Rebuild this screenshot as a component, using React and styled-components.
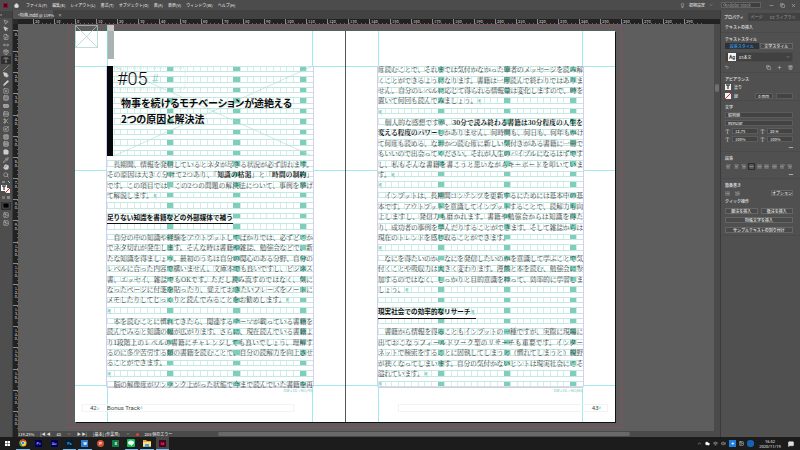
import React from 'react';
import styled, { createGlobalStyle, css } from 'styled-components';
import {
  MousePointer2, MousePointer, FileSymlink, MoveHorizontal, Package, Type, Slash, PenTool, Pencil,
  SquareX, Square, RectangleHorizontal, Rows3, Scissors, Scaling, SquareDashedBottom, Rows2,
  StickyNote, Pipette, Hand, Search, House, Plus, Trash2, Undo2, AlignLeft, AlignCenter,
  AlignRight, AlignJustify, List, ListOrdered, ChevronDown, Copy, Minus, X, Lightbulb,
  Cloud, Wifi, Volume2, MessageSquare, ChevronUp, Image as ImageIcon,
} from 'lucide-react';

const SANS = '"Noto Sans CJK JP", "Noto Sans", sans-serif';
const MINT = '#7fcdbb';
const LINE = '#c6e8e2';
const CELL = '#d3eee9';
const GUIDE = '#a3e9f0';

const Global = createGlobalStyle`
  *, *::before, *::after { box-sizing: border-box; }
  body { margin: 0; background: #535353; font-family: ${SANS}; overflow: hidden; }
  button, input, select { font: inherit; color: inherit; margin: 0; padding: 0; border: 0; background: none; border-radius: 0; min-width: 0; }
  select { appearance: none; }
  svg { display: block; flex: none; }
  h1, h2, p { margin: 0; font-size: inherit; font-weight: inherit; }
`;

const Shell = styled.div`
  display: grid;
  grid-template-rows: 10px 1fr 13px;
  height: 100vh;
  color: #dcdcdc;
  font-size: 4px;
  font-weight: 500;
  line-height: 6px;
  white-space: nowrap;
`;
const MenuBar = styled.header`
  display: flex;
  align-items: center;
  background: #4c4c4c;
  padding: 0 4px 0 3px;
`;
const AppLogo = styled.span`
  width: 5px; height: 5px;
  margin-right: 6px;
  background: #49021f;
  border: 1px solid #8a1440;
`;
const Menus = styled.nav`
  display: flex;
  gap: 5px;
  flex: 1;
  margin-left: 7px;
  button { line-height: 6px; }
`;
const MenuRight = styled.div`
  display: flex;
  align-items: center;
  gap: 4px;
`;
const SearchBox = styled.label`
  display: flex;
  align-items: center;
  width: 40px; height: 6px;
  margin-left: 4px;
  padding-left: 1px;
  background: #3f3f3f;
  border: 1px solid #626262;
  input { width: 30px; height: 4px; line-height: 4px; }
  input::placeholder { color: #8a8a8a; }
`;
const WindowKeys = styled.div`
  display: flex;
  align-items: center;
  gap: 6px;
  margin-left: 4px;
`;

const Body = styled.div`
  display: grid;
  grid-template-columns: 13px 1fr 80px;
  min-height: 0;
`;
const ToolRail = styled.aside`
  display: flex;
  flex-direction: column;
  align-items: center;
  background: #4e4e4e;
  border-right: 1px solid #3a3a3a;
  padding-top: 1px;
  color: #cdcdcd;
`;
const RailGrip = styled.div`
  width: 12px; height: 7px;
  background: #424242;
`;
const Tools = styled.div`
  display: grid;
  grid-template-rows: repeat(21, 1fr);
  height: 161px;
  width: 12px;
`;
const Tool = styled.button`
  display: grid;
  place-items: center;
  width: 10px;
  margin-left: 1px;
  background: ${(p) => (p.$on ? '#2f2f2f' : 'transparent')};
`;
const RailSwatch = styled.div`
  display: flex;
  flex-direction: column;
  align-items: center;
  gap: 2px;
  margin-top: 1px;
`;

const Workspace = styled.main`
  display: grid;
  grid-template-rows: 9px 5px 1fr 6px;
  grid-template-columns: 5px 1fr 6px;
  min-width: 0; min-height: 0;
  background: #5e5e5e;
`;
const TabBar = styled.div`
  grid-column: 1 / -1;
  display: flex;
  background: #424242;
`;
const DocTab = styled.button`
  width: 40px;
  text-align: left;
  padding-left: 5px;
  background: #535353;
`;
const rulerNumber = css`
  font-size: 4px;
  line-height: 4px;
  color: #bdbdbd;
`;
const RulerCorner = styled.div`
  background: #2a2a2a;
`;
const RulerX = styled.div`
  display: grid;
  grid-template-columns: repeat(32, 1fr);
  padding: 0 15px;
  background: #222;
  grid-column: 2 / -1;
  overflow: hidden;
  span { ${rulerNumber} padding-left: 1px; min-width: 0; border-left: 1px solid #8a8a8a;
    background: repeating-linear-gradient(90deg, #666 0 1px, transparent 1px 4px) 0 100% / 100% 1px no-repeat; }
`;
const RulerY = styled.div`
  display: grid;
  grid-template-rows: repeat(19, 1fr);
  padding: 6px 0 5px;
  background: #222;
  grid-row: 3 / -1;
  overflow: hidden;
  span { ${rulerNumber} min-height: 0; padding-top: 1px; border-top: 1px solid #8a8a8a; writing-mode: vertical-rl; text-orientation: upright;
    background: repeating-linear-gradient(180deg, #666 0 1px, transparent 1px 4px) 100% 0 / 1px 100% no-repeat; }
`;
const Canvas = styled.section`
  padding: 0 92px 3px 50px;
  display: grid;
  min-width: 0; min-height: 0;
`;
const ScrollY = styled.div`
  background: #4a4a4a;
  padding-top: 60px;
  &::before { content: ''; display: block; width: 4px; height: 8px; margin: 0 1px; border-radius: 2px; background: #707070; }
`;
const StatusBar = styled.div`
  grid-column: 2 / -1;
  display: flex;
  align-items: center;
  gap: 6px;
  background: #4a4a4a;
  overflow: hidden;
`;
const Dot = styled.i`
  width: 3px; height: 3px;
  border-radius: 50%;
  background: #e8432e;
`;
const ScrollX = styled.div`
  flex: 1;
  height: 6px;
  margin-left: 40px;
  padding: 1px 0;
  &::before { content: ''; display: block; width: 82%; height: 4px; border-radius: 2px; background: #696969; }
`;

const Bleed = styled.div`
  position: relative;
  display: grid;
  border: 1px solid #85505e;
  padding: 6px 6px 5px;
  min-height: 0;
`;
const Spread = styled.div`
  display: grid;
  grid-template-columns: 1fr 1fr;
  background: #fff;
  box-shadow: 1px 1px 0 #111;
  min-height: 0;
`;
const Page = styled.article`
  position: relative;
  display: flex;
  flex-direction: column;
  padding: 35px 32px 0;
  min-width: 0; min-height: 0;
  background:
    linear-gradient(${GUIDE}, ${GUIDE}) 32px 0 / 1px 100% no-repeat,
    linear-gradient(${GUIDE}, ${GUIDE}) calc(100% - 32px) 0 / 1px 100% no-repeat,
    linear-gradient(${GUIDE}, ${GUIDE}) 0 35px / 100% 1px no-repeat,
    linear-gradient(${GUIDE}, ${GUIDE}) 0 139px / 100% 1px no-repeat,
    linear-gradient(${GUIDE}, ${GUIDE}) 0 calc(100% - 36px) / 100% 1px no-repeat;
  & + & { border-left: 1px solid #555; }
`;
const Frame = styled.div`
  container-type: inline-size;
  flex: 1;
  min-height: 0;
`;
/* 31 characters by 31 lines, the em being one cell wide */
const FrameGrid = styled.div`
  display: grid;
  grid-template-rows: repeat(31, 1fr);
  grid-template-columns: 100%;
  row-gap: 4px;
  height: 100%;
  font-size: calc(100cqi / 31);
  box-shadow: -1px 0 0 #d6cdf2, 1px 0 0 #d6cdf2, 0 1px 0 #e0c6e2;
  background: #fff;
`;
const Row = styled.p`
  grid-column: 1;
  grid-row: ${(p) => p.$n};
  display: flex;
  align-items: center;
  min-height: 0;
  line-height: 10px;
  color: #3c3c3c;
  font-family: "Noto Serif CJK JP", "Liberation Serif", ${SANS};
  font-weight: 400;
  border-top: 1px solid ${LINE};
  border-bottom: 1px solid ${LINE};
  background:
    linear-gradient(90deg,
      transparent calc(900% / 31), ${MINT} calc(900% / 31) calc(1000% / 31),
      transparent calc(1000% / 31) calc(1900% / 31), ${MINT} calc(1900% / 31) calc(2000% / 31),
      transparent calc(2000% / 31) calc(2900% / 31), ${MINT} calc(2900% / 31) calc(3000% / 31),
      transparent calc(3000% / 31)) border-box,
    repeating-linear-gradient(90deg, ${CELL} 0 1px, transparent 1px calc(100% / 31));
`;
const Line = styled.span`
  flex: 1;
  white-space: pre;
  text-align-last: ${(p) => (p.$full ? 'justify' : 'left')};
  b { font-weight: 700; color: #111; }
  i { font-style: normal; color: ${MINT}; font-size: 5px; }
`;
const SubHeading = styled.h2`
  align-self: flex-start;
  z-index: 1;
  font-family: ${SANS};
  font-weight: 700;
  line-height: 6px;
  color: #111;
  padding-bottom: 3px;
  border-bottom: 1px solid #111;
  i { font-style: normal; color: ${MINT}; font-size: 5px; }
`;
const Opener = styled.div`
  grid-column: 1;
  grid-row: 1 / 10;
  position: relative;
  z-index: 1;
  border-left: 6px solid #05080a;
  padding: 4px 0 0 4px;
  color: #0c0c0c;
`;
const OpenerLines = styled.svg`
  position: absolute;
  inset: 0;
  width: 100%; height: 100%;
`;
const ChapterNumber = styled.div`
  position: relative;
  display: flex;
  align-items: center;
  gap: 4px;
  font: 300 18px/18px Roboto, sans-serif;
  span { color: ${MINT}; font-size: 12px; }
`;
const Title = styled.h1`
  position: relative;
  margin: 7px 0 0 4px;
  font: 700 10px/16px ${SANS};
  font-feature-settings: "palt";
`;
const FrameInfo = styled.div`
  height: 4px;
  margin-top: 2px;
  font-size: 3px;
  line-height: 4px;
  text-align: right;
  color: ${MINT};
`;
const Footer = styled.footer`
  display: flex;
  align-items: center;
  height: 8px;
  margin: ${(p) => (p.$right ? '11px -25px 10px 20px' : '11px 19px 10px -25px')};
  padding: 0 ${(p) => (p.$right ? '6px' : '0')} 0 ${(p) => (p.$right ? '0' : '7px')};
  justify-content: ${(p) => (p.$right ? 'flex-end' : 'flex-start')};
  border: 1px solid #f0f4f4;
  color: #444;
  font: 400 6px/6px Roboto, ${SANS};
  i { font-style: normal; color: ${MINT}; font-size: 4px; }
  span { width: 17px; }
`;
const Placeholder = styled.svg`
  position: absolute;
  left: 6px; top: 0;
`;
const ThumbTab = styled.div`
  position: absolute;
  left: 38px; top: 0;
  width: 7px; height: 34px;
  background: linear-gradient(#c6c6c6 6px, #a9b3b2 6px);
  border-left: 1px solid #8ed6d0;
`;

const Panel = styled.aside`
  display: flex;
  flex-direction: column;
  background: #505050;
  border-left: 1px solid #3a3a3a;
`;
const PanelTabs = styled.div`
  display: flex;
  height: 8px;
  margin-top: 3px;
  background: #424242;
  color: #8f8f8f;
  button { padding: 0 4px 0 3px; }
  button:first-child { background: #505050; color: #f0f0f0; }
`;
const Section = styled.section`
  display: flex;
  flex-direction: column;
  padding: 2px 7px 0 4px;
  border-bottom: 1px solid #4a4a4a;
`;
const Label = styled.h2`
  height: ${(p) => p.$h || 8}px;
  line-height: 8px;
  color: #e6e6e6;
`;
const Controls = styled.div`
  display: flex;
  align-items: center;
  justify-content: ${(p) => p.$j || 'flex-start'};
  gap: ${(p) => p.$gap || 2}px;
  height: ${(p) => p.$h || 8}px;
`;
const Btn = styled.button`
  flex: ${(p) => (p.$fit ? 'none' : 1)};
  height: 6px;
  line-height: 4px;
  text-align: center;
  background: ${(p) => (p.$on ? '#2b3238' : '#4a4a4a')};
  color: ${(p) => (p.$on ? '#3f9be8' : '#e6e6e6')};
  border: 1px solid ${(p) => (p.$on ? '#2b3238' : '#666')};
`;
const Select = styled.select`
  flex: 1;
  height: 6px;
  line-height: 4px;
  padding: 0 2px;
  background: #434343;
  border: 1px solid #5c5c5c;
`;
const Field = styled.input`
  flex: 1;
  width: 18px; height: 6px;
  padding: 0 2px;
  background: #434343;
  border: 1px solid #5c5c5c;
`;
const StyleBox = styled.div`
  display: flex;
  align-items: center;
  height: 10px;
  margin-top: 2px;
  padding: 0 2px;
  gap: 1px;
  background: #414141;
  border: 1px solid #4a4a4a;
  select { border: 0; background: none; }
`;
const Ag = styled.b`
  width: 8px; height: 8px;
  background: #f4f4f4;
  color: #333;
  font: 700 5px/8px Roboto, sans-serif;
  text-align: center;
`;
const Align = styled.button`
  display: grid;
  place-items: center;
  width: 7px; height: 7px;
  color: #b4b4b4;
  background: ${(p) => (p.$on ? '#2e2e2e' : 'transparent')};
`;
const Spacer = styled.span`flex: 1;`;

const TaskBar = styled.footer`
  display: flex;
  justify-content: space-between;
  background: #1c1c1c;
`;
const Apps = styled.div`
  display: grid;
  grid-template-columns: repeat(11, 1fr);
  width: 170px;
`;
const Task = styled.button`
  display: grid;
  place-items: center;
  margin: 0 1px;
  background: ${(p) => (p.$on ? '#454545' : 'transparent')};
  border-bottom: 1px solid ${(p) => (p.$open ? '#76b9ed' : 'transparent')};
`;
const Tile = styled.span`
  width: 7px; height: 7px;
  background: ${(p) => p.$bg};
  color: ${(p) => p.$fg};
  font: 700 4px/7px Roboto, sans-serif;
  text-align: center;
  border-radius: ${(p) => p.$r || 0}px;
`;
const Tray = styled.div`
  display: flex;
  align-items: center;
  gap: 3px;
  padding-right: 6px;
  color: #e8e8e8;
`;
const Clock = styled.div`
  width: 22px;
  margin: 0 4px 0 2px;
  font: 400 4px/5px Roboto, sans-serif;
  text-align: center;
`;

const left = {
  10: '　長期間、情報を発信しているとネタが尽きる状況が必ず訪れます。',
  11: 'その原因は大きく分けて2つあり、*「知識の枯渇」*と*「時間の制約」*',
  12: 'です。この項目では、この2つの問題の解決法について、事例を挙げ',
  13: 'て解説します。¶',
  15: '#足りない知識を書籍などの外部媒体で補う',
  17: '　自分の中の知識や経験をアウトプットしてばかりでは、必ずどこか',
  18: 'でネタ切れが発生します。そんな時は書籍や雑誌、勉強会などで、新',
  19: 'たな知識を得ましょう。最初のうちは自分の関心のある分野、自分の',
  20: 'レベルに合った内容で構いません。文庫本でも良いですし、ビジネス',
  21: '書、エッセイ、雑誌でもOKです。ただし読み流すのではなく、気に',
  22: 'なったページに付箋を貼ったり、覚えておきたいフレーズをノートに',
  23: 'メモしたりしてじっくりと読んでみることをお勧めします。¶',
  24: '¶',
  25: '　本を読むことに慣れてきたら、関連するテーマが載っている書籍を',
  26: '読んでみると知識の幅が広がります。さらに、現在読んでいる書籍よ',
  27: 'り1段階上のレベルの書籍にチャレンジしても良いでしょう。理解す',
  28: 'るのに多少苦労する類の書籍を読むことで、自分の読解力を向上させ',
  29: 'ることができます。¶',
  30: '¶',
  31: '　脳の解像度がワンランク上がった状態で今まで読んでいた書籍を再',
};
const right = {
  1: '度読むことで、それまでは気付かなかった筆者のメッセージを読み解',
  2: 'くことができるようになります。書籍は一度読んで終わりではありま',
  3: 'せん。自分のレベルに応じて得られる情報量は変化しますので、時を',
  4: '置いて何回も読んでみましょう。¶',
  5: '¶',
  6: '　個人的な感想ですが、*30分で読み終わる書籍は30分程度の人生を*',
  7: '*変える程度のパワー*しかありません。何時間も、何日も、何年もかけ',
  8: 'て何度も読める、なおかつ読む度に新しい気付きがある書籍に一冊で',
  9: 'もいいので出会ってください。それが人生のバイブルになるはずです',
  10: 'し、私もそんな書籍を書こうと思いながらキーボードを叩いていま',
  11: 'す。¶',
  12: '¶',
  13: '　インプットは、長期間コンテンツを更新するにためには基本中の基',
  14: '本です。アウトプットを意識してインプットすることで、読解力も向',
  15: '上しますし、発信力も磨かれます。書籍や勉強会からは知識を得た',
  16: 'り、成功者の事例を学んだりすることができます。そして雑誌からは',
  17: '現在のトレンドを感じ取ることができます。',
  18: '¶',
  19: '　なにを得たいのか、なにを発信したいのかを意識して学ぶことで気',
  20: '付くことや吸収力は大きく変わります。漫然と本を読む、勉強会に参',
  21: '加するのではなく、しっかりと目的意識を持って、効率的に学習しま',
  22: 'しょう。¶',
  24: '#現実社会での効率的なリサーチ¶',
  26: '　書籍から情報を得ることもインプットの一種ですが、実際に現場に',
  27: '出ておこなうフィールドワーク型のリサーチも重要です。インター',
  28: 'ネットで検索をすることに固執してしまうと（慣れてしまうと）視野',
  29: 'が狭くなってしまいます。自分の気付かないヒントは現実社会にこそ',
  30: '溢れています。¶',
  31: '¶',
};

const rich = (text) =>
  text.split(/(\*[^*]+\*|¶)/).map((part, i) => {
    if (part === '¶') return <i key={i}>¶</i>;
    if (part.startsWith('*')) return <b key={i}>{part.slice(1, -1)}</b>;
    return part;
  });

function TextFrame({ lines, children }) {
  return (
    <Frame>
      <FrameGrid>
        {Array.from({ length: 31 }, (_, i) => {
          const text = lines[i + 1] || '';
          return (
            <Row key={i} $n={i + 1} as={text[0] === '#' ? 'div' : 'p'}>
              {text[0] === '#'
                ? <SubHeading>{rich(text.slice(1))}</SubHeading>
                : <Line $full={text.length > 29}>{rich(text)}</Line>}
            </Row>
          );
        })}
        {children}
      </FrameGrid>
    </Frame>
  );
}

const menus = ['ファイル(F)', '編集(E)', 'レイアウト(L)', '書式(T)', 'オブジェクト(O)', '表(A)', '表示(V)', 'ウィンドウ(W)', 'ヘルプ(H)'];
const tools = [
  ['選択', MousePointer2], ['ダイレクト選択', MousePointer, 'currentColor'], ['ページ', FileSymlink], ['間隔', MoveHorizontal],
  ['コンテンツ収集', Package], ['文字', Type], ['線', Slash], ['ペン', PenTool, 'currentColor'], ['鉛筆', Pencil, 'currentColor'],
  ['長方形フレーム', SquareX], ['長方形', Square, '#777'], ['横組みグリッド', RectangleHorizontal, '#999'], ['縦組みグリッド', Rows3],
  ['はさみ', Scissors], ['自由変形', Scaling], ['グラデーション', SquareDashedBottom, '#888'], ['ぼかし', Rows2, '#777'],
  ['注釈', StickyNote, 'currentColor'], ['スポイト', Pipette], ['手のひら', Hand, 'currentColor'], ['ズーム', Search],
];
const aligns = [AlignLeft, AlignCenter, AlignRight, AlignJustify, AlignJustify, AlignJustify, AlignJustify, AlignLeft, AlignRight];

const NoStroke = () => (
  <svg width="6" height="6" viewBox="0 0 6 6"><rect width="6" height="6" fill="#f3f3f3" /><path d="M0 6 6 0" stroke="#e02236" /></svg>
);

function Properties() {
  return (
    <Panel>
      <PanelTabs>
        <button>プロパティ</button><button>ページ</button><button>CC ライブラリ</button>
      </PanelTabs>
      <Section><Label $h={9}>テキストの挿入</Label></Section>
      <Section>
        <Label $h={7}>テキストスタイル</Label>
        <Controls $gap={1}><Btn $on>段落スタイル</Btn><Btn>文字スタイル</Btn></Controls>
        <StyleBox>
          <Ag>Ag</Ag>
          <Select aria-label="段落スタイル"><option>03本文</option></Select>
          <ChevronDown size={4} />
        </StyleBox>
        <Controls $h={10} $gap={6}>
          <Undo2 size={4} /><Spacer /><Copy size={5} /><Plus size={5} /><Trash2 size={5} />
        </Controls>
      </Section>
      <Section>
        <Label>アピアランス</Label>
        <Controls $gap={3}>
          <svg width="6" height="6" viewBox="0 0 6 6"><rect width="6" height="6" fill="#eee" /><path d="M1 1H5M3 1V5" stroke="#111" /></svg>塗り
        </Controls>
        <Controls $gap={3} $h={9}>
          <NoStroke />線<Spacer />
          <Field aria-label="線幅" defaultValue="0 mm" /><Select aria-label="線種" />
        </Controls>
      </Section>
      <Section>
        <Label>文字</Label>
        <Controls><Select aria-label="フォント"><option>貂明朝</option></Select></Controls>
        <Controls><Select aria-label="スタイル"><option>Regular</option></Select></Controls>
        <Controls><Type size={5} /><Field aria-label="サイズ" defaultValue="12.75" /><Type size={5} /><Field aria-label="行送り" defaultValue="20 H" /></Controls>
        <Controls><Type size={5} /><Field aria-label="垂直比率" defaultValue="100%" /><Type size={5} /><Field aria-label="水平比率" defaultValue="100%" /></Controls>
        <Controls $j="flex-end">•••</Controls>
      </Section>
      <Section>
        <Label>段落</Label>
        <Controls $j="space-between" $gap={1}>
          {aligns.map((Icon, i) => <Align key={i} $on={i === 3} aria-label={`行揃え ${i + 1}`}><Icon size={5} strokeWidth={3} /></Align>)}
        </Controls>
        <Controls $j="flex-end">•••</Controls>
      </Section>
      <Section>
        <Label>箇条書き</Label>
        <Controls $gap={5}><List size={5} /><ListOrdered size={5} /><Spacer /><Btn $fit>オプション</Btn></Controls>
        <Label $h={9}>クイック操作</Label>
        <Controls $gap={3} $h={9}><Btn>脚注を挿入</Btn><Btn>後注を挿入</Btn></Controls>
        <Controls $h={10}><Btn>特殊文字を挿入</Btn></Controls>
        <Controls $h={10}><Btn>サンプルテキストの割り付け</Btn></Controls>
      </Section>
    </Panel>
  );
}

function Chrome() {
  return (
    <svg width="8" height="8" viewBox="0 0 16 16">
      <circle cx="8" cy="8" r="7" fill="#f5c518" />
      <path d="M8 8 2 4.2A7 7 0 0 1 14.2 4.8H8Z" fill="#e2402f" />
      <path d="M8 8 5 14.4A7 7 0 0 1 2 4.2L5.3 9.5Z" fill="#2fa24c" />
      <circle cx="8" cy="8" r="3.4" fill="#fff" /><circle cx="8" cy="8" r="2.5" fill="#3b82f0" />
    </svg>
  );
}

export default function App() {
  return (
    <Shell>
      <Global />
      <MenuBar>
        <AppLogo />
        <House size={5} fill="#ddd" />
        <Menus>{menus.map((m) => <button key={m}>{m}</button>)}</Menus>
        <MenuRight>
          <Lightbulb size={5} />
          <button>初期設定</button><ChevronDown size={4} />
          <SearchBox><Search size={4} /><input aria-label="検索" placeholder="Adobe Stock" /></SearchBox>
          <WindowKeys><Minus size={5} /><Copy size={5} /><X size={5} /></WindowKeys>
        </MenuRight>
      </MenuBar>
      <Body>
        <ToolRail>
          <RailGrip>»</RailGrip>
          <Tools>
            {tools.map(([name, Icon, fill]) => (
              <Tool key={name} aria-label={name} $on={name === '文字'}><Icon size={6} fill={fill || 'none'} /></Tool>
            ))}
          </Tools>
          <RailSwatch>
            <svg width="10" height="14" viewBox="0 0 10 14">
              <path d="M1 2H4M7 1 9 3" stroke="#bbb" fill="none" />
              <rect x="4" y="8" width="5" height="5" fill="#eee" /><path d="M4 13 9 8" stroke="#e02236" />
              <rect y="5" width="6" height="6" fill="#fff" /><path d="M1 6H5M3 6V10" stroke="#111" />
            </svg>
            <svg width="10" height="4" viewBox="0 0 10 4"><rect x="1" width="3" height="3" fill="#777" /><rect x="6" width="3" height="3" fill="#888" /></svg>
            <svg width="10" height="8" viewBox="0 0 10 8"><rect width="10" height="8" fill="#303030" /><rect x="2" y="1" width="6" height="5" fill="#000" stroke="#777" strokeWidth=".5" /></svg>
            <ImageIcon size={6} /><ImageIcon size={6} />
          </RailSwatch>
        </ToolRail>
        <Workspace>
          <TabBar><DocTab>*特典.indd @ 119%　×</DocTab></TabBar>
          <RulerCorner />
          <RulerX>{Array.from({ length: 32 }, (_, i) => <span key={i}>{Math.abs(i - 2) * 10}</span>)}</RulerX>
          <RulerY>{Array.from({ length: 19 }, (_, i) => <span key={i}>{i * 10}</span>)}</RulerY>
          <Canvas>
            <Bleed>
              <Spread>
                <Page>
                  <TextFrame lines={left}>
                    <Opener>
                      <OpenerLines viewBox="0 0 200 90" preserveAspectRatio="none">
                        <path d="M0 0 200 90M0 90 200 0" stroke="#a9dcd2" strokeWidth=".6" fill="none" />
                        <rect x="4" y="2" width="68" height="21" stroke="#a9dcd2" strokeWidth=".6" strokeDasharray="1 1" fill="none" />
                      </OpenerLines>
                      <ChapterNumber>#05<span>#</span></ChapterNumber>
                      <Title>物事を続けるモチベーションが途絶える<br />2つの原因と解決法</Title>
                    </Opener>
                  </TextFrame>
                  <FrameInfo>31W x 31L = 961(748)</FrameInfo>
                  <Footer><span>42<i>#</i></span>Bonus Track<i>#</i></Footer>
                </Page>
                <Page>
                  <TextFrame lines={right} />
                  <FrameInfo>31W x 31L = 961(665)</FrameInfo>
                  <Footer $right>43<i>#</i></Footer>
                </Page>
              </Spread>
              <Placeholder width="23" height="23" viewBox="0 0 23 23">
                <path d="M.5.5H22.5V22.5H.5ZM.5.5 22.5 22.5M22.5.5.5 22.5" fill="none" stroke="#a4cfc8" strokeWidth=".7" />
              </Placeholder>
              <ThumbTab />
            </Bleed>
          </Canvas>
          <ScrollY />
          <StatusBar>
            <span>119.25%</span><span>|◀ ◀</span><span>42</span><ChevronDown size={4} /><span>▶ ▶|</span><span>[基本] (作業用)</span><ChevronDown size={4} />
            <Dot /><span>288 個のエラー</span><ScrollX />
          </StatusBar>
        </Workspace>
        <Properties />
      </Body>
      <TaskBar>
        <Apps>
          <Task aria-label="スタート"><svg width="5" height="5" viewBox="0 0 5 5"><path d="M0 0H2.3V2.3H0ZM2.7 0H5V2.3H2.7ZM0 2.7H2.3V5H0ZM2.7 2.7H5V5H2.7Z" fill="#fff" /></svg></Task>
          <Task aria-label="Chrome" $open><Chrome /></Task>
          <Task><Tile $bg="#00005b" $fg="#9999ff">Pr</Tile></Task>
          <Task><Tile $bg="#00005b" $fg="#9999ff">Au</Tile></Task>
          <Task $open><Tile $bg="#001e36" $fg="#31a8ff">Ps</Tile></Task>
          <Task $open><Tile $bg="#2b7cd3" $fg="#fff">W</Tile></Task>
          <Task><Tile $bg="#d35230" $fg="#fff" $r={4}>P</Tile></Task>
          <Task><Tile $bg="#107c41" $fg="#fff">X</Tile></Task>
          <Task aria-label="LINE" $open><svg width="8" height="8" viewBox="0 0 8 8"><rect width="8" height="8" rx="1" fill="#06c755" /><path d="M4 1.5c2 0 3 1 3 2.2S5 6 4 7V5.8C2 5.7 1 4.8 1 3.7S2 1.5 4 1.5Z" fill="#fff" /></svg></Task>
          <Task aria-label="エクスプローラー" $open><svg width="8" height="7" viewBox="0 0 8 7"><path d="M0 0H3L4 1H8V7H0Z" fill="#e9a92c" /><path d="M0 2H8V6H0Z" fill="#fbe08a" /><path d="M2 4H6V7H2Z" fill="#4aa3e0" /></svg></Task>
          <Task $on $open><Tile $bg="#49021f" $fg="#ff3366">Id</Tile></Task>
        </Apps>
        <Tray>
          <ChevronUp size={5} /><Cloud size={5} fill="#fff" /><Wifi size={5} /><Volume2 size={5} />
          <Tile $bg="#1f7fe0" $fg="#fff">✦</Tile><ImageIcon size={5} /><Tile $bg="#1464b4" $fg="#fff" $r={3} />
          <Clock>16:52<br />2020/11/19</Clock>
          <MessageSquare size={6} fill="#ddd" />
        </Tray>
      </TaskBar>
    </Shell>
  );
}
